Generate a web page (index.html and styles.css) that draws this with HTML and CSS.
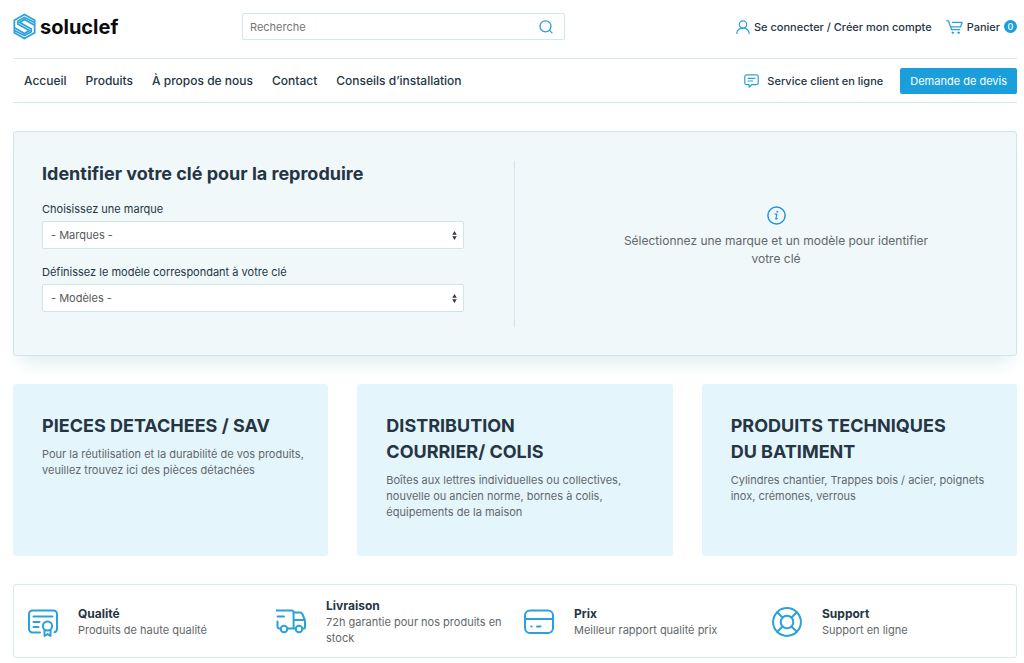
FILE: index.html
```html
<!DOCTYPE html>
<html lang="fr">
<head>
<meta charset="utf-8">
<title>Soluclef</title>
<meta name="viewport" content="width=device-width, initial-scale=1">
<link rel="stylesheet" href="styles.css">
</head>
<body>
<div class="page">
  <header class="topbar">
    <a class="logo" href="#">
      <svg class="logo-mark" width="23" height="27" viewBox="0 0 24 28" fill="none" stroke="#2ba1dc" stroke-width="1.8" stroke-linejoin="miter" aria-hidden="true">
        <path d="M12 1.500 22.600 7.500v13L12 26.500 1.400 20.500v-13z"/>
        <path d="M22 9.500 12 4.500 5 8.500v3l12 6.800-5 2.900-10-5.700"/>
        <path d="M2 18.500 12 23.500l7-4v-3L7 9.700l5-2.900 10 5.700"/>
      </svg>
      <span class="logo-text">soluclef</span>
    </a>
    <form class="search" role="search">
      <input class="search-input" type="search" placeholder="Recherche" aria-label="Recherche">
      <button class="search-button" type="button" aria-label="Rechercher">
        <svg width="14" height="14" viewBox="0 0 14 14" fill="none" stroke="#2ba1dc" stroke-width="1.300" stroke-linecap="round"><circle cx="6.500" cy="6.300" r="5.500"/><path d="M10.500 10.400 13 12.900"/></svg>
      </button>
    </form>
    <div class="account">
      <a class="account-link" href="#">
        <svg width="14" height="14" viewBox="0 0 14 14" fill="none" stroke="#2ba1dc" stroke-width="1.200" stroke-linecap="round" aria-hidden="true"><circle cx="7" cy="4.500" r="3.700"/><path d="M.8 13.300C1.200 10.200 3.600 8.200 7 8.200s5.800 2 6.200 5.100"/></svg>
        Se connecter / Créer mon compte
      </a>
      <a class="account-link" href="#">
        <svg width="17" height="16" viewBox="0 0 17 16" fill="none" stroke="#2ba1dc" stroke-width="1.300" stroke-linecap="round" stroke-linejoin="round" aria-hidden="true"><path d="M.8 1.800h1.600L5.600 10.700h8.200M6.300 3.300h9.800l-1.400 4.500H5"/><circle cx="6.800" cy="13.700" r=".9" fill="#2ba1dc" stroke-width=".6"/><circle cx="12.600" cy="13.700" r=".9" fill="#2ba1dc" stroke-width=".6"/></svg>
        Panier <span class="count">0</span>
      </a>
    </div>
  </header>

  <div class="navbar">
    <nav class="menu">
      <a href="#">Accueil</a>
      <a href="#">Produits</a>
      <a href="#">À propos de nous</a>
      <a href="#">Contact</a>
      <a href="#">Conseils d’installation</a>
    </nav>
    <div class="actions">
      <a class="service" href="#">
        <svg width="15" height="14" viewBox="0 0 15 14" fill="none" stroke="#2ba1dc" stroke-width="1.200" stroke-linecap="round" stroke-linejoin="round" aria-hidden="true"><path d="M2.600.8h9.800a1.800 1.800 0 0 1 1.800 1.800v6.300a1.800 1.800 0 0 1-1.800 1.800H7.700l-2.600 2.500v-2.500H2.600A1.800 1.800 0 0 1 .8 8.900V2.600A1.800 1.800 0 0 1 2.600.8zM4 4.300h7M4 7h4.500"/></svg>
        Service client en ligne
      </a>
      <button class="quote" type="button">Demande de devis</button>
    </div>
  </div>

  <main>
    <section class="finder">
      <form class="finder-form">
        <h1 class="finder-title">Identifier votre clé pour la reproduire</h1>
        <label class="field-label" for="brand">Choisissez une marque</label>
        <select class="field" id="brand"><option>- Marques -</option></select>
        <label class="field-label" for="model">Définissez le modèle correspondant à votre clé</label>
        <select class="field" id="model"><option>- Modèles -</option></select>
      </form>
      <div class="finder-info">
        <svg width="19" height="19" viewBox="0 0 19 19" fill="none" stroke="#2496d1" stroke-linecap="round" stroke-linejoin="round" aria-hidden="true"><circle cx="9.500" cy="9.500" r="8.600" stroke-width="1.500"/><path d="M8 8.100h1.900L8.800 12.800c-.1.600.6.500 1.500-.2" stroke-width="1.200"/><circle cx="10.200" cy="5.700" r=".7" fill="#2496d1" stroke-width=".4"/></svg>
        <p class="finder-text">Sélectionnez une marque et un modèle pour identifier votre clé</p>
      </div>
    </section>

    <section class="cards">
      <a class="card" href="#">
        <h2 class="card-title">PIECES DETACHEES / SAV</h2>
        <p class="card-text">Pour la réutilisation et la durabilité de vos produits, veuillez trouvez ici des pièces détachées</p>
      </a>
      <a class="card" href="#">
        <h2 class="card-title">DISTRIBUTION<br>COURRIER/ COLIS</h2>
        <p class="card-text">Boîtes aux lettres individuelles ou collectives, nouvelle ou ancien norme, bornes à colis, équipements de la maison</p>
      </a>
      <a class="card" href="#">
        <h2 class="card-title">PRODUITS TECHNIQUES<br>DU BATIMENT</h2>
        <p class="card-text">Cylindres chantier, Trappes bois / acier, poignets inox, crémones, verrous</p>
      </a>
    </section>

    <section class="benefits">
      <div class="benefit">
        <svg class="benefit-icon" viewBox="0 0 30 30" aria-hidden="true"><path d="M12 25.500H4.500A3.500 3.500 0 0 1 1 22V7a3.500 3.500 0 0 1 3.500-3.500h21A3.500 3.500 0 0 1 29 7v15a3.500 3.500 0 0 1-2.500 3.300M5.500 9.500h19M5.500 15h6M5.500 20h5"/><circle cx="19.500" cy="19" r="4.600"/><path d="M16.500 23v6l3-1.900 3 1.900V23"/></svg>
        <div>
          <h3 class="benefit-title">Qualité</h3>
          <p class="benefit-text">Produits de haute qualité</p>
        </div>
      </div>
      <div class="benefit">
        <svg class="benefit-icon" viewBox="0 0 30 30" aria-hidden="true"><path d="M0 3.500h15.600a2 2 0 0 1 2 2v16M1.500 9.500H8M1.500 14.500v5a2 2 0 0 0 2 2h1M11.500 21.500h8M26.500 21.500h.9a1.600 1.600 0 0 0 1.600-1.600V14.500a7 7 0 0 0-.7-3l-2-4.500a2.500 2.500 0 0 0-2.300-1.500H18M18 13h10.500"/><circle cx="8" cy="22" r="3.300"/><circle cx="23" cy="22" r="3.300"/></svg>
        <div>
          <h3 class="benefit-title">Livraison</h3>
          <p class="benefit-text">72h garantie pour nos produits en stock</p>
        </div>
      </div>
      <div class="benefit">
        <svg class="benefit-icon" viewBox="0 0 30 30" aria-hidden="true"><rect x="1" y="3.500" width="28" height="22.500" rx="5"/><path d="M1 12h28M7.400 19.500h.3M13 19.500h3.500"/></svg>
        <div>
          <h3 class="benefit-title">Prix</h3>
          <p class="benefit-text">Meilleur rapport qualité prix</p>
        </div>
      </div>
      <div class="benefit">
        <svg class="benefit-icon" viewBox="0 0 30 30" aria-hidden="true"><circle cx="15" cy="15" r="13.900"/><circle cx="15" cy="15" r="6.300"/><path d="M5.200 5.200l5.300 5.300M24.800 5.200l-5.300 5.300M5.200 24.800l5.300-5.300M24.800 24.800l-5.300-5.300"/></svg>
        <div>
          <h3 class="benefit-title">Support</h3>
          <p class="benefit-text">Support en ligne</p>
        </div>
      </div>
    </section>
  </main>
</div>
</body>
</html>
```

FILE: styles.css
```css
* {
  box-sizing: border-box;
}

body {
  margin: 0;
  background: #fff;
  color: #253544;
  font-family: Inter, "Liberation Sans", sans-serif;
  font-size: 11px;
  line-height: 16px;
}

h1, h2, h3, p {
  margin: 0;
}

a {
  color: inherit;
  text-decoration: none;
}

svg {
  display: block;
  flex: none;
}

input, select, button {
  font: inherit;
}

.page {
  padding: 0 7px 6px 13px;
}

.topbar {
  display: grid;
  grid-template-columns: 229fr 323fr 452fr;
  align-items: center;
  padding: 13px 0 18px;
}

.logo {
  display: flex;
  align-items: center;
  gap: 4px;
}

.logo-text {
  color: #0b0b0d;
  font-size: 20px;
  font-weight: 700;
  line-height: 26px;
}

.search {
  display: flex;
  align-items: center;
  border: 1px solid #d3e8ea;
  border-radius: 2px;
}

.search-input {
  flex: 1;
  min-width: 0;
  height: 25px;
  padding: 0 7px;
  border: 0;
  background: none;
  color: #253544;
  outline: none;
}

.search-input::placeholder {
  color: #757575;
}

.search-button {
  padding: 0 11px;
  border: 0;
  background: none;
}

.account {
  display: flex;
  justify-content: flex-end;
  gap: 14px;
  font-weight: 500;
}

.account-link {
  display: flex;
  align-items: center;
  gap: 4px;
}

.count {
  width: 13px;
  border-radius: 7px;
  background: #1b9fdc;
  color: #fff;
  font-size: 9px;
  line-height: 13px;
  text-align: center;
}

.navbar {
  display: flex;
  align-items: center;
  justify-content: space-between;
  padding: 9px 0 8px;
  border-top: 1px solid #d9eaec;
  border-bottom: 1px solid #d9eaec;
  font-weight: 500;
}

.menu {
  display: flex;
  gap: 19px;
  padding-left: 11px;
  font-size: 12px;
}

.actions {
  display: flex;
  align-items: center;
  gap: 17px;
}

.service {
  display: flex;
  align-items: center;
  gap: 8px;
}

.quote {
  padding: 5px 10px;
  border: 0;
  border-radius: 2px;
  background: #1b9fdc;
  color: #fff;
  font-weight: 400;
}

.finder {
  display: grid;
  grid-template-columns: 1fr 1fr;
  margin-top: 28px;
  padding: 29px 28px 28px;
  border: 1px solid #cfe6e9;
  border-radius: 3px;
  background: #f0f8fa;
  box-shadow: 0 14px 18px -8px #dcecef;
}

.finder-form {
  padding-right: 50px;
  border-right: 1px solid #d5e6ea;
}

.finder-title {
  margin-bottom: 14px;
  font-size: 18px;
  font-weight: 700;
  line-height: 26px;
}

.field-label {
  display: block;
  margin-bottom: 4px;
}

.field {
  display: block;
  width: 100%;
  height: 28px;
  margin-bottom: 15px;
  padding: 0 8px;
  border: 1px solid #cfe6e9;
  border-radius: 2px;
  appearance: none;
  background: #fff url("data:image/svg+xml,%3Csvg xmlns='http://www.w3.org/2000/svg' viewBox='0 0 4 8'%3E%3Cpath fill='%23343a40' d='M0 3.400 2 0l2 3.400zM0 4.600h4L2 8z'/%3E%3C/svg%3E") no-repeat right 6px center / 5px 9px;
  color: #55595c;
}

.finder-info {
  display: flex;
  flex-direction: column;
  align-items: center;
  justify-content: center;
  gap: 7px;
  padding: 0 0 14px 49px;
}

.finder-text {
  max-width: 320px;
  color: #62676b;
  font-size: 12px;
  line-height: 18px;
  text-align: center;
}

.cards {
  display: grid;
  grid-template-columns: repeat(3, 1fr);
  gap: 29px;
  margin-top: 28px;
}

.card {
  min-height: 172px;
  padding: 29px 20px 29px 29px;
  border-radius: 3px;
  background: #e5f5fc;
}

.card-title {
  margin-bottom: 7px;
  font-size: 18px;
  font-weight: 700;
  line-height: 26px;
}

.card-text, .benefit-text {
  color: #62676b;
}

.benefits {
  display: grid;
  grid-template-columns: repeat(4, 1fr);
  margin-top: 28px;
  padding: 0 10px 0 0;
  border: 1px solid #d9eaec;
  border-radius: 3px;
}

.benefit {
  display: flex;
  align-items: center;
  gap: 20px;
  padding: 12px 4px 11px 14px;
}

.benefit-icon {
  width: 30px;
  height: 30px;
  fill: none;
  stroke: #2ba1dc;
  stroke-width: 2;
  stroke-linecap: round;
  stroke-linejoin: round;
}

.benefit-title {
  font-size: 12px;
  font-weight: 700;
  line-height: 17px;
}
```
